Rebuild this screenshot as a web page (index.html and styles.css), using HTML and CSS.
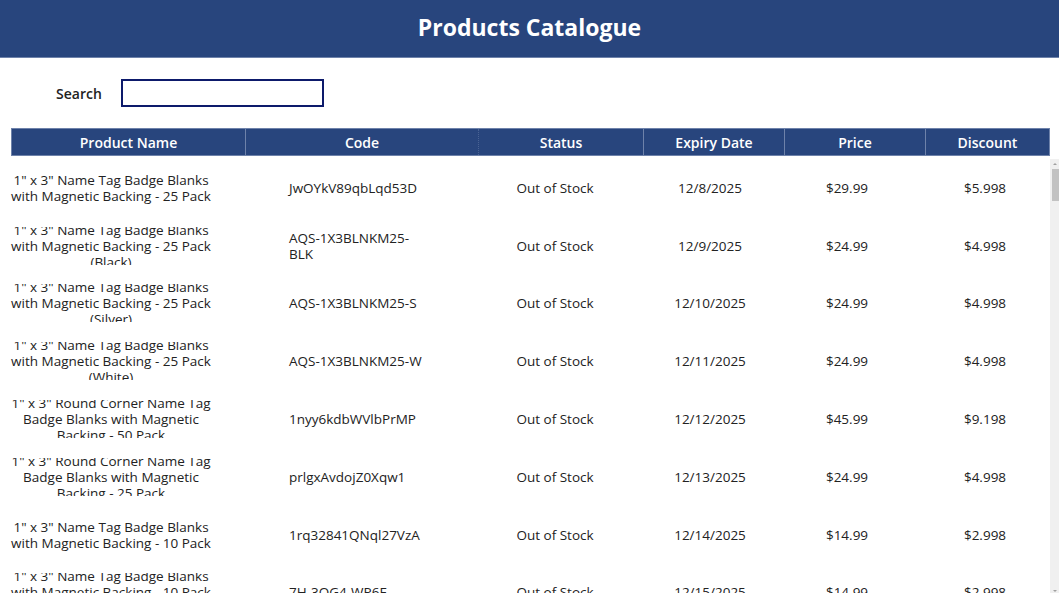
FILE: index.html
```html
<!DOCTYPE html>
<html lang="en">
<head>
  <meta charset="UTF-8" />
  <title>Products Catalogue</title>
  <link rel="stylesheet" href="styles.css">
</head>
<body>

  <div class="topbar">
    <h1>Products Catalogue</h1>
  </div>

  <div class="search">
    <label for="searchBox">Search</label>
    <input type="text" id="searchBox">
  </div>

  <div class="grid-head">
    <div>Product Name</div>
    <div>Code</div>
    <div class="dotted">Status</div>
    <div>Expiry Date</div>
    <div>Price</div>
    <div>Discount</div>
  </div>

  <div class="list">
    <div class="rows" id="rows"></div>
    <div class="scrollbar">
      <span class="arrow up"></span>
      <span class="thumb"></span>
      <span class="arrow down"></span>
    </div>
  </div>

  <script>
    const products = [
      ['1" x 3" Name Tag Badge Blanks with Magnetic Backing - 25 Pack', 'JwOYkV89qbLqd53D', '12/8/2025', '$29.99', '$5.998'],
      ['1" x 3" Name Tag Badge Blanks with Magnetic Backing - 25 Pack (Black)', 'AQS-1X3BLNKM25-BLK', '12/9/2025', '$24.99', '$4.998'],
      ['1" x 3" Name Tag Badge Blanks with Magnetic Backing - 25 Pack (Silver)', 'AQS-1X3BLNKM25-S', '12/10/2025', '$24.99', '$4.998'],
      ['1" x 3" Name Tag Badge Blanks with Magnetic Backing - 25 Pack (White)', 'AQS-1X3BLNKM25-W', '12/11/2025', '$24.99', '$4.998'],
      ['1" x 3" Round Corner Name Tag Badge Blanks with Magnetic Backing - 50 Pack', '1nyy6kdbWVlbPrMP', '12/12/2025', '$45.99', '$9.198'],
      ['1" x 3" Round Corner Name Tag Badge Blanks with Magnetic Backing - 25 Pack', 'prlgxAvdojZ0Xqw1', '12/13/2025', '$24.99', '$4.998'],
      ['1" x 3" Name Tag Badge Blanks with Magnetic Backing - 10 Pack', '1rq32841QNql27VzA', '12/14/2025', '$14.99', '$2.998'],
      ['1" x 3" Name Tag Badge Blanks with Magnetic Backing - 10 Pack (Black)', '7H-3OG4-WP6F', '12/15/2025', '$14.99', '$2.998']
    ];

    const rows = document.getElementById('rows');

    products.forEach(p => {
      const row = document.createElement('div');
      row.className = 'row';
      row.innerHTML =
        '<div class="name"><span>' + p[0].replace(/"/g, '&quot;') + '</span></div>' +
        '<div class="code"><span>' + p[1] + '</span></div>' +
        '<div class="mid">Out of Stock</div>' +
        '<div class="mid">' + p[2] + '</div>' +
        '<div class="mid">' + p[3] + '</div>' +
        '<div class="mid">' + p[4] + '</div>';
      rows.appendChild(row);
    });
  </script>
</body>
</html>
```

FILE: styles.css
```css
body {
  margin: 0;
  font-family: 'Open Sans', sans-serif;
  color: #222;
  background-color: #fff;
  width: 1059px;
  height: 593px;
  overflow: hidden;
}
.topbar {
  height: 57px;
  background-color: #28457d;
  border-bottom: 1px solid #6e82aa;
  display: flex;
  justify-content: center;
  align-items: center;
}
.topbar h1 {
  margin: 0 0 3px 0;
  color: white;
  font-size: 23px;
  font-weight: 700;
}
.search {
  height: 70px;
  display: flex;
  align-items: center;
  padding-left: 56px;
  font-size: 14px;
  font-weight: 600;
}
.search input {
  margin-left: 19px;
  width: 199px;
  height: 24px;
  border: 2px solid #0d1a6b;
  padding: 0;
  box-sizing: content-box;
  outline: none;
}
.grid-head {
  margin-left: 11px;
  width: 1037px;
  height: 26px;
  background-color: #28457d;
  border: 1px solid #6e82aa;
  display: grid;
  grid-template-columns: 233px 233px 165px 141px 141px 1fr;
  color: white;
  font-size: 14px;
  font-weight: 600;
}
.grid-head div {
  display: flex;
  align-items: center;
  justify-content: center;
  border-left: 1px solid #6e82aa;
}
.grid-head div:first-child {
  border-left: none;
}
.grid-head .dotted {
  border-left: 1px dotted #4a6394;
}
.list {
  display: flex;
  height: 437px;
  overflow: hidden;
}
.rows {
  width: 1050px;
  padding-top: 3px;
}
.row {
  height: 57.8px;
  display: grid;
  grid-template-columns: 206px 266px 150px 160px 114px 162px;
  padding-left: 8px;
  font-size: 13.5px;
  line-height: 16px;
}
.name {
  height: 38px;
  align-self: center;
  overflow: hidden;
  display: flex;
  align-items: center;
  justify-content: center;
  text-align: center;
}
.name span {
  display: block;
  width: 100%;
  flex-shrink: 0;
}
.code {
  display: flex;
  align-items: center;
  padding-left: 75px;
}
.code span {
  width: 140px;
}
.mid {
  display: flex;
  align-items: center;
  justify-content: center;
}
.scrollbar {
  width: 9px;
  margin-top: 3px;
  background-color: #f0f0f0;
  position: relative;
}
.thumb {
  position: absolute;
  left: 2px;
  right: 0;
  top: 10px;
  height: 32px;
  background-color: #c2c2c2;
}
.arrow {
  position: absolute;
  left: 3px;
  width: 0;
  height: 0;
  border-left: 2px solid transparent;
  border-right: 2px solid transparent;
}
.arrow.up {
  top: 4px;
  border-bottom: 2px solid #a0a0a0;
}
.arrow.down {
  bottom: 1px;
  border-top: 2px solid #a0a0a0;
}
```
